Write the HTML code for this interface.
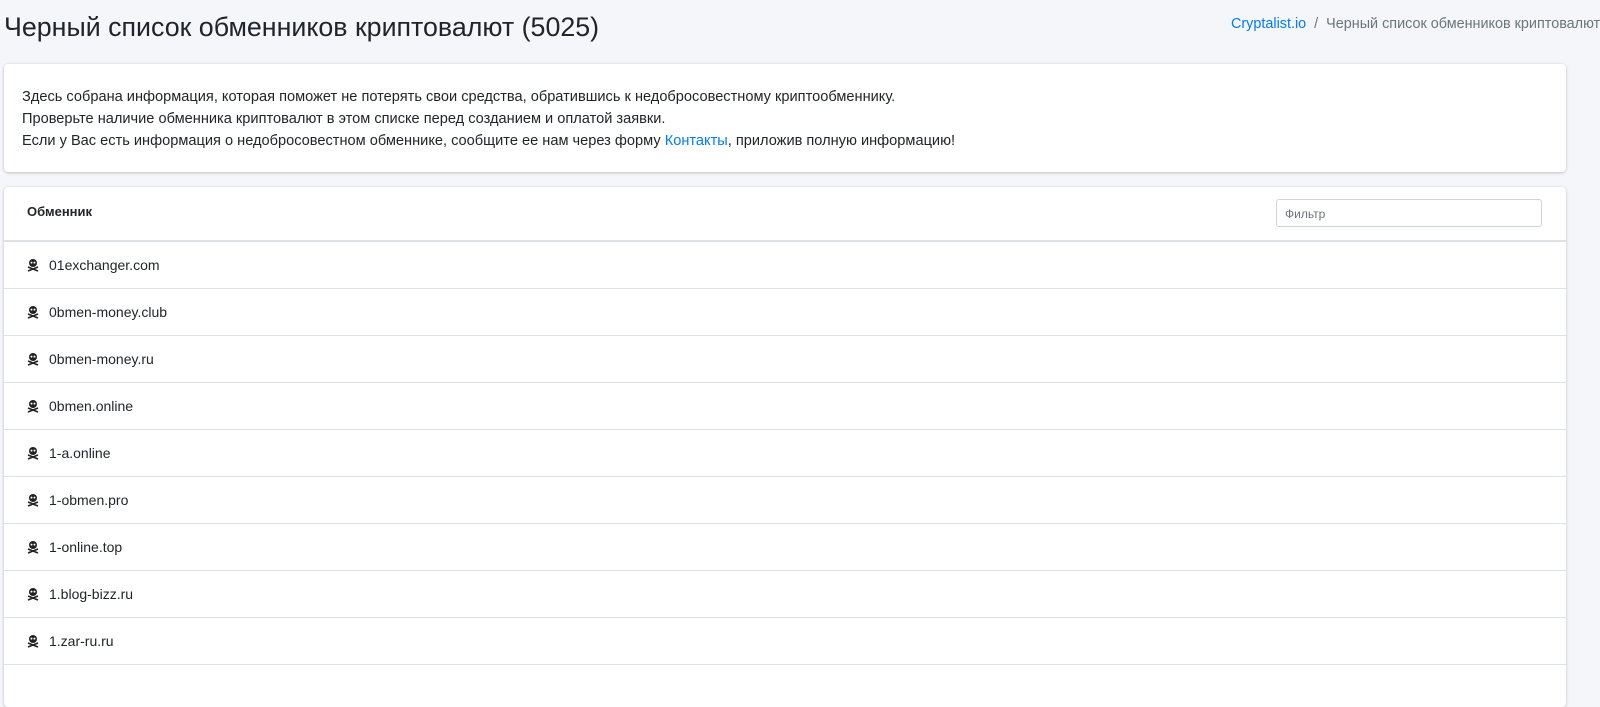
<!DOCTYPE html>
<html><head><meta charset="utf-8"><style>
body{margin:0;background:#f4f6f9;font-family:"Liberation Sans",sans-serif;color:#212529;width:1600px;height:677px;overflow:hidden;position:relative}
h1{position:absolute;left:4px;top:8px;margin:0;font-size:26.8px;font-weight:400;line-height:38px;white-space:nowrap}
.bc{position:absolute;left:1231px;top:14px;font-size:14.4px;line-height:20px;color:#6c757d;white-space:nowrap}
.bc a{color:#007bff;text-decoration:none}
.card{position:absolute;left:4px;width:1562px;background:#fff;border-radius:4px;box-shadow:0 0 1px rgba(0,0,0,.13),0 1px 3px rgba(0,0,0,.2)}
.info{top:64px;height:108px;font-size:14.6px;line-height:22px}
.info div{padding:22px 0 0 18px}
.info a{color:#007bff;text-decoration:none}
.list{top:187px;height:520px}
.hdr{height:53px;border-bottom:2px solid #dee2e6;position:relative}
.hdr b{position:absolute;left:23px;top:17px;font-size:13px}
.hdr .f{position:absolute;left:1272px;top:12px;width:266px;height:28px;border:1px solid #ced4da;border-radius:3px;font-size:12px;color:#6c757d;line-height:28px;padding-left:8px;box-sizing:border-box}
.row{height:46px;border-bottom:1px solid #dee2e6;font-size:14px;line-height:46px;padding-left:22px;display:flex;align-items:center}
.row svg{margin-right:9px}
</style></head><body>
<h1>Черный список обменников криптовалют (5025)</h1>
<div class="bc"><a>Cryptalist.io</a> &nbsp;/&nbsp; Черный список обменников криптовалют</div>
<div class="card info"><div>Здесь собрана информация, которая поможет не потерять свои средства, обратившись к недобросовестному криптообменнику.<br>Проверьте наличие обменника криптовалют в этом списке перед созданием и оплатой заявки.<br>Если у Вас есть информация о недобросовестном обменнике, сообщите ее нам через форму <a>Контакты</a>, приложив полную информацию!</div></div>
<div class="card list">
<div class="hdr"><b>Обменник</b><div class="f">Фильтр</div></div>
<div class="row"><svg width="14" height="14" viewBox="0 0 14 14"><circle cx="7" cy="5" r="4" fill="#222"/><circle cx="5.5" cy="4.6" r="1" fill="#fff"/><circle cx="8.5" cy="4.6" r="1" fill="#fff"/><path d="M2 9l10 4M12 9L2 13" stroke="#222" stroke-width="1.6"/></svg>01exchanger.com</div>
<div class="row"><svg width="14" height="14" viewBox="0 0 14 14"><circle cx="7" cy="5" r="4" fill="#222"/><circle cx="5.5" cy="4.6" r="1" fill="#fff"/><circle cx="8.5" cy="4.6" r="1" fill="#fff"/><path d="M2 9l10 4M12 9L2 13" stroke="#222" stroke-width="1.6"/></svg>0bmen-money.club</div>
<div class="row"><svg width="14" height="14" viewBox="0 0 14 14"><circle cx="7" cy="5" r="4" fill="#222"/><circle cx="5.5" cy="4.6" r="1" fill="#fff"/><circle cx="8.5" cy="4.6" r="1" fill="#fff"/><path d="M2 9l10 4M12 9L2 13" stroke="#222" stroke-width="1.6"/></svg>0bmen-money.ru</div>
<div class="row"><svg width="14" height="14" viewBox="0 0 14 14"><circle cx="7" cy="5" r="4" fill="#222"/><circle cx="5.5" cy="4.6" r="1" fill="#fff"/><circle cx="8.5" cy="4.6" r="1" fill="#fff"/><path d="M2 9l10 4M12 9L2 13" stroke="#222" stroke-width="1.6"/></svg>0bmen.online</div>
<div class="row"><svg width="14" height="14" viewBox="0 0 14 14"><circle cx="7" cy="5" r="4" fill="#222"/><circle cx="5.5" cy="4.6" r="1" fill="#fff"/><circle cx="8.5" cy="4.6" r="1" fill="#fff"/><path d="M2 9l10 4M12 9L2 13" stroke="#222" stroke-width="1.6"/></svg>1-a.online</div>
<div class="row"><svg width="14" height="14" viewBox="0 0 14 14"><circle cx="7" cy="5" r="4" fill="#222"/><circle cx="5.5" cy="4.6" r="1" fill="#fff"/><circle cx="8.5" cy="4.6" r="1" fill="#fff"/><path d="M2 9l10 4M12 9L2 13" stroke="#222" stroke-width="1.6"/></svg>1-obmen.pro</div>
<div class="row"><svg width="14" height="14" viewBox="0 0 14 14"><circle cx="7" cy="5" r="4" fill="#222"/><circle cx="5.5" cy="4.6" r="1" fill="#fff"/><circle cx="8.5" cy="4.6" r="1" fill="#fff"/><path d="M2 9l10 4M12 9L2 13" stroke="#222" stroke-width="1.6"/></svg>1-online.top</div>
<div class="row"><svg width="14" height="14" viewBox="0 0 14 14"><circle cx="7" cy="5" r="4" fill="#222"/><circle cx="5.5" cy="4.6" r="1" fill="#fff"/><circle cx="8.5" cy="4.6" r="1" fill="#fff"/><path d="M2 9l10 4M12 9L2 13" stroke="#222" stroke-width="1.6"/></svg>1.blog-bizz.ru</div>
<div class="row"><svg width="14" height="14" viewBox="0 0 14 14"><circle cx="7" cy="5" r="4" fill="#222"/><circle cx="5.5" cy="4.6" r="1" fill="#fff"/><circle cx="8.5" cy="4.6" r="1" fill="#fff"/><path d="M2 9l10 4M12 9L2 13" stroke="#222" stroke-width="1.6"/></svg>1.zar-ru.ru</div>
</div>
</body></html>
